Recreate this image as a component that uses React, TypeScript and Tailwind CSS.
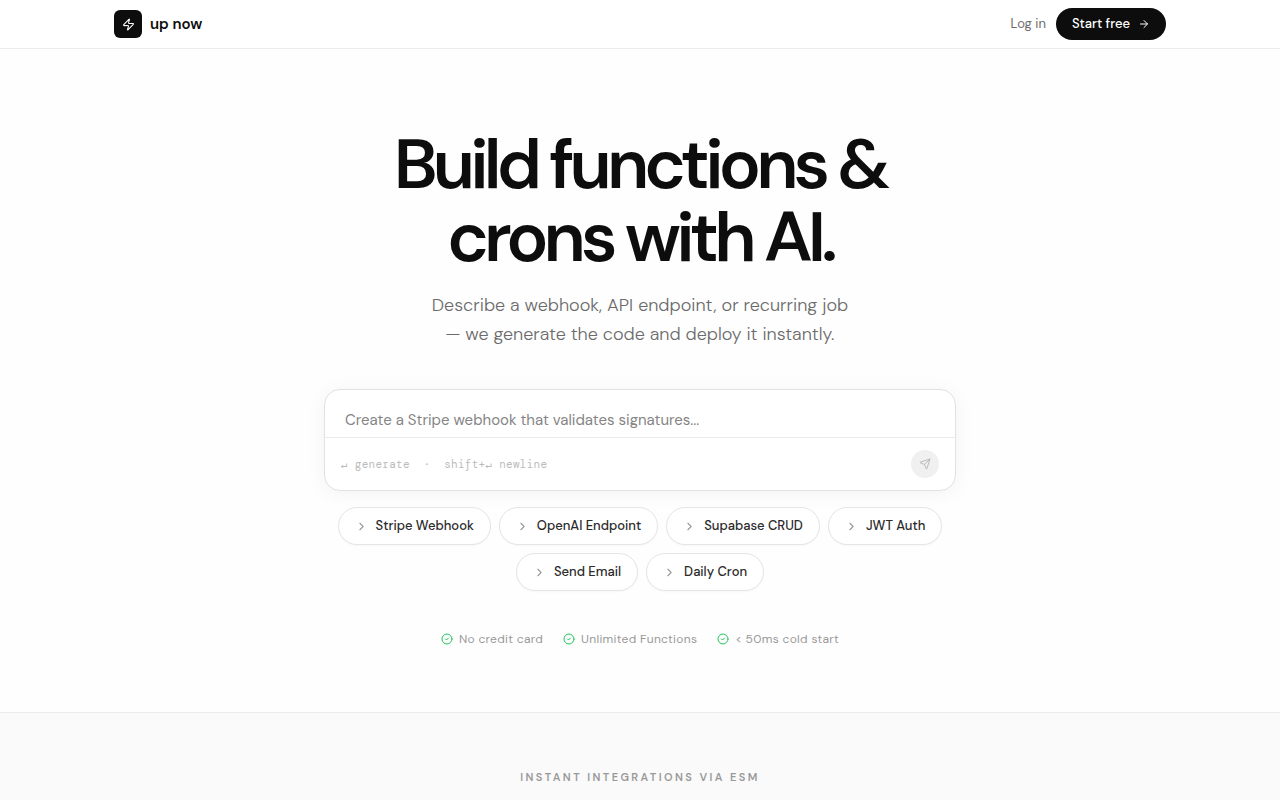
import React, { useState } from 'react';
import { ArrowRight, ChevronRight, CircleCheck, Send, Zap } from 'lucide-react';

const templates = [
  'Stripe Webhook',
  'OpenAI Endpoint',
  'Supabase CRUD',
  'JWT Auth',
  'Send Email',
  'Daily Cron',
];

const perks = ['No credit card', 'Unlimited Functions', '< 50ms cold start'];

function Header() {
  return (
    <header className="border-b border-[#ebebeb] bg-white">
      <div className="mx-auto flex h-12 max-w-[1100px] items-center justify-between px-6">
        <a href="#" className="flex items-center gap-2">
          <span className="flex size-7 items-center justify-center rounded-md bg-[#0d0d0d] text-white">
            <Zap size={13} />
          </span>
          <span className="text-[15px] font-semibold text-[#0d0d0d]">up now</span>
        </a>
        <nav className="flex items-center gap-2.5">
          <a href="#login" className="text-[13px] text-[#6b6b6b]">
            Log in
          </a>
          <a
            href="#signup"
            className="flex h-8 items-center gap-2 rounded-full bg-[#0d0d0d] px-4 text-[13px] font-medium text-white"
          >
            Start free
            <ArrowRight size={12} />
          </a>
        </nav>
      </div>
    </header>
  );
}

function PromptBox() {
  const [prompt, setPrompt] = useState('');

  return (
    <form
      className="overflow-hidden rounded-2xl border border-[#e2e2e2] bg-white shadow-[0_2px_20px_rgba(0,0,0,0.05)]"
      onSubmit={(e) => e.preventDefault()}
    >
      <textarea
        rows={1}
        aria-label="Describe your function"
        value={prompt}
        onChange={(e) => setPrompt(e.target.value)}
        placeholder="Create a Stripe webhook that validates signatures..."
        className="block w-full resize-none px-5 pt-[18px] pb-[5px] text-[15px] leading-6 text-[#0d0d0d] outline-none placeholder:text-[#858585]"
      />
      <div className="flex items-center justify-between border-t border-[#ebebeb] px-4 py-3">
        <span className="font-['DM_Mono','Liberation_Mono',monospace] text-[11px] tracking-wide whitespace-pre text-[#bbb]">
          {'↵ generate  ·  shift+↵ newline'}
        </span>
        <button
          type="submit"
          aria-label="Generate"
          disabled={!prompt.trim()}
          className="flex size-7 items-center justify-center rounded-full bg-[#0d0d0d] text-white disabled:bg-[#f0f0f0] disabled:text-[#bbb]"
        >
          <Send size={12} />
        </button>
      </div>
    </form>
  );
}

export default function App() {
  return (
    <div className="min-h-screen bg-[#fefefe] font-['DM_Sans',Inter,sans-serif] text-[#0d0d0d]">
      <Header />

      <main>
        {/* Hero */}
        <section className="mx-auto max-w-[680px] px-6 pt-[79px] pb-16">
          <h1 className="text-center text-[70px] leading-[73px] font-semibold tracking-[-0.07em]">
            Build functions &amp;
            <br />
            crons with AI.
          </h1>
          <p className="mt-[17px] text-center text-[18px] leading-[29px] font-light text-[#6b6b6b]">
            Describe a webhook, API endpoint, or recurring job
            <br />— we generate the code and deploy it instantly.
          </p>

          <div className="mt-10">
            <PromptBox />
          </div>

          <div className="mt-4 flex flex-wrap justify-center gap-2">
            {templates.map((name) => (
              <button
                key={name}
                type="button"
                className="flex items-center gap-2 rounded-full border border-[#e5e5e5] bg-white px-4 py-2 text-[13px] leading-5 font-medium text-[#2b2b2b] shadow-[0_1px_2px_rgba(0,0,0,0.03)]"
              >
                <ChevronRight size={13} className="text-[#999]" />
                {name}
              </button>
            ))}
          </div>

          <ul className="mt-[39px] flex flex-wrap justify-center gap-5">
            {perks.map((perk) => (
              <li key={perk} className="flex items-center gap-1.5 text-[12px] leading-[18px] tracking-wide text-[#999]">
                <CircleCheck size={12} className="text-[#22c55e]" />
                {perk}
              </li>
            ))}
          </ul>
        </section>

        {/* Integrations */}
        <section className="border-t border-[#ebebeb] bg-[#fafafa] px-6 pt-14 pb-4">
          <h2 className="text-center text-[11px] leading-4 font-semibold tracking-[0.22em] text-[#999] uppercase">
            Instant integrations via ESM
          </h2>
        </section>
      </main>
    </div>
  );
}
